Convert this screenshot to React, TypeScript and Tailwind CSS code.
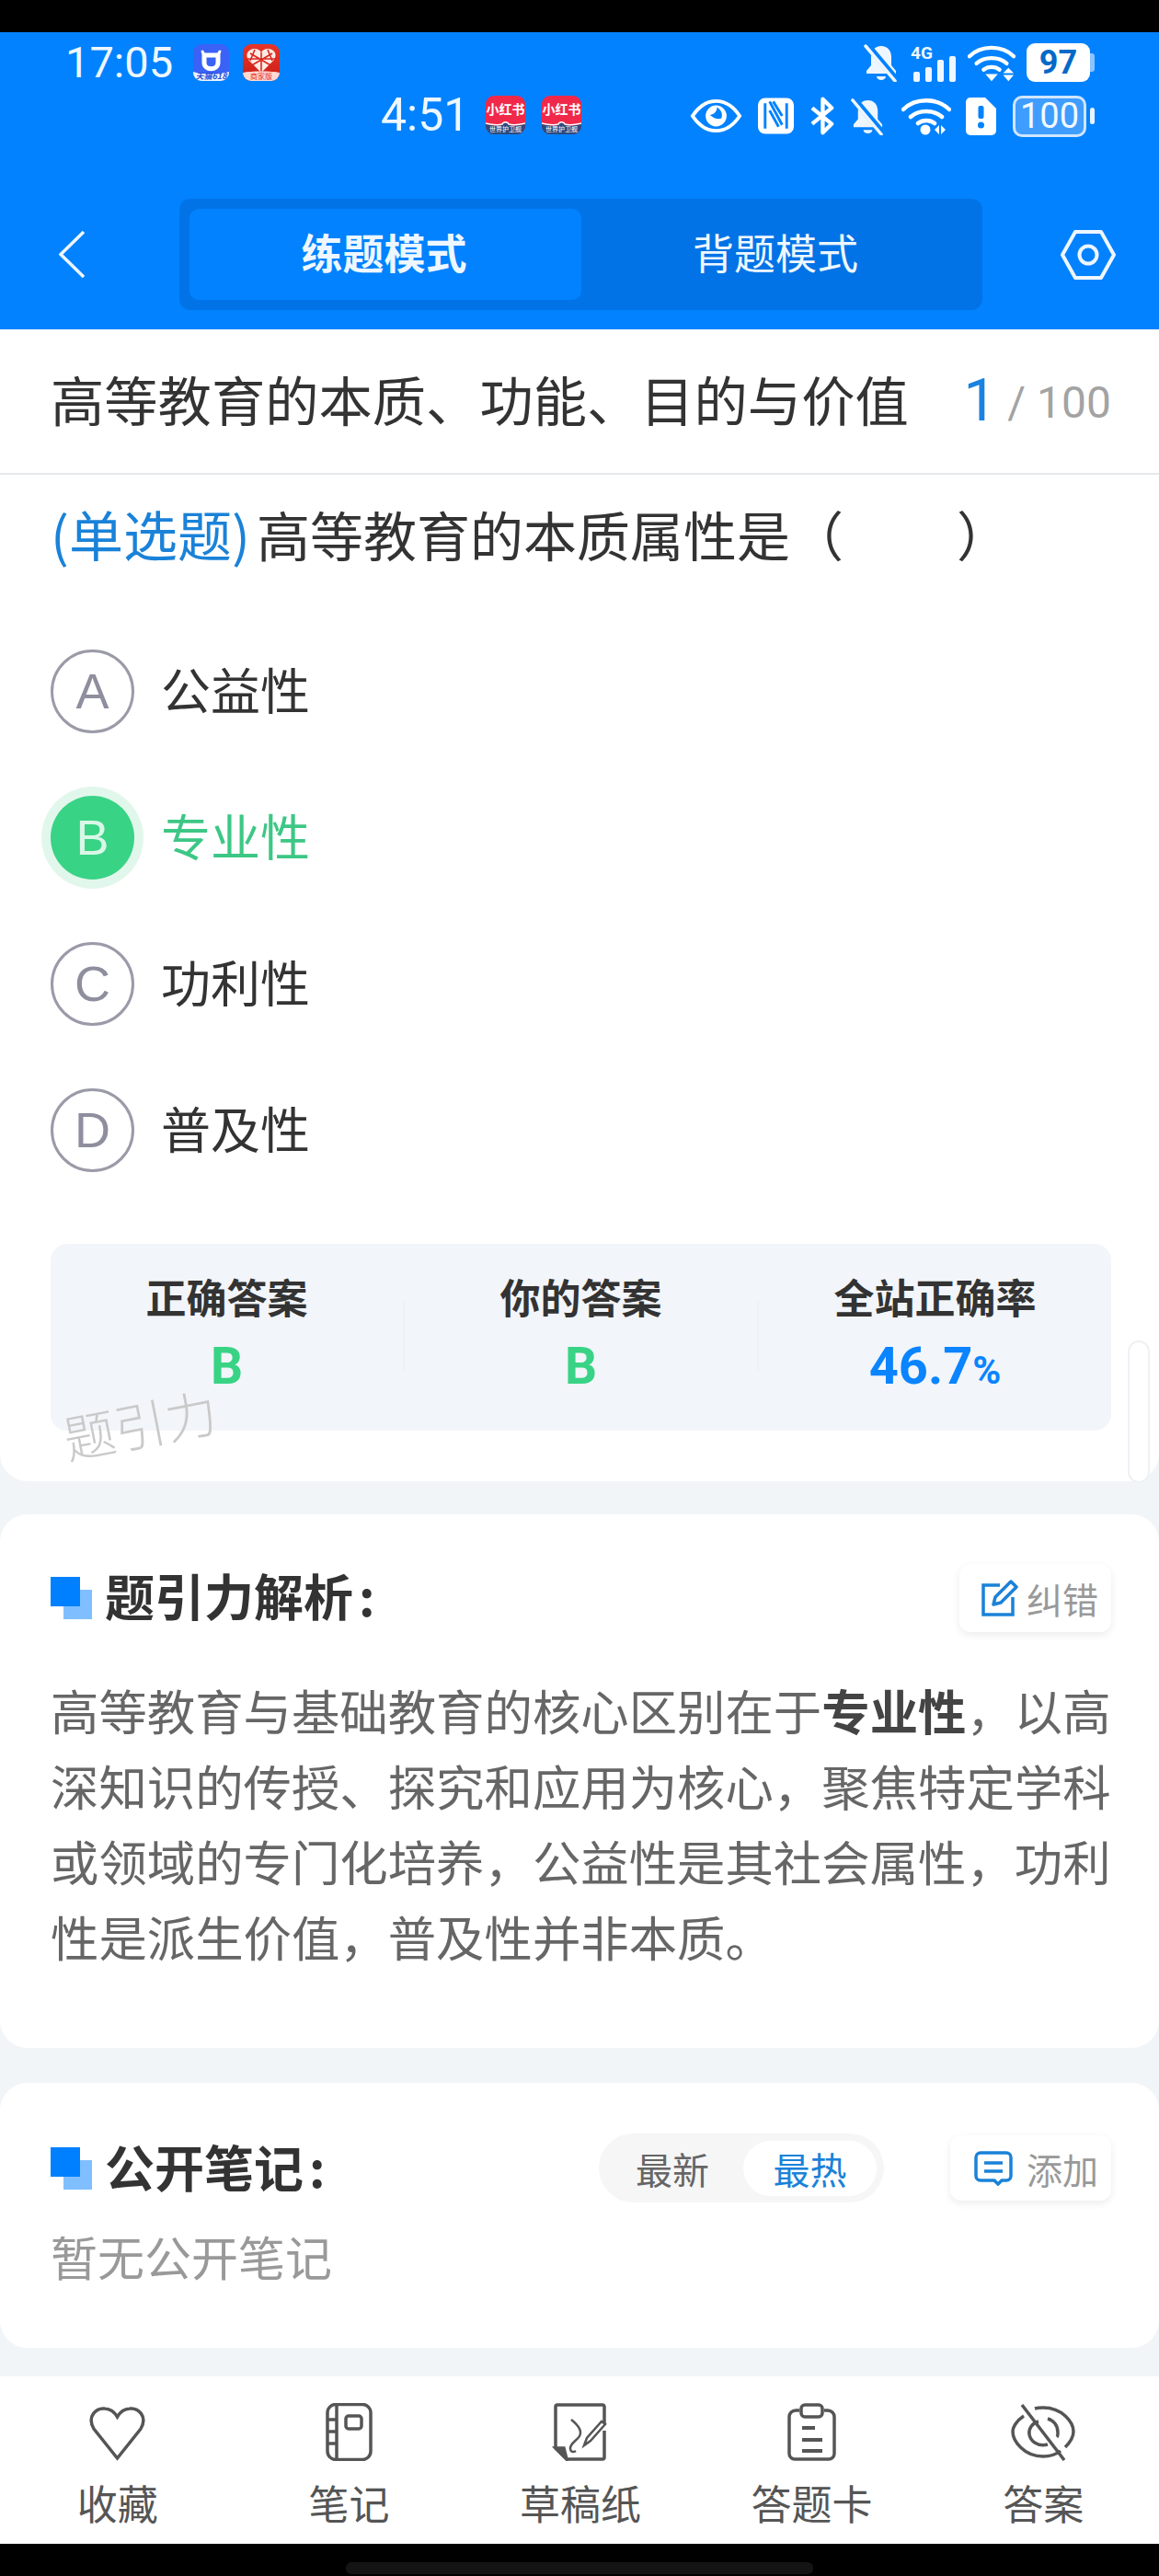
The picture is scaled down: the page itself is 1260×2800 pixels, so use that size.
const cjk = "font-['Noto_Sans_CJK_SC','Noto_Sans',sans-serif]"

function BellOff({ className }: { className: string }) {
  return (
    <svg viewBox="0 0 38 42" className={className}>
      <path d="M19 3c-7 0-11 5-11 12v9l-5 6v3h32v-3l-5-6v-9c0-7-4-12-11-12z" fill="#eef6ff" />
      <path d="M14 36h10a5 4 0 0 1-10 0z" fill="#eef6ff" />
      <path d="M3 1l32 38" stroke="#0282fe" strokeWidth="7" />
      <path d="M2 3l32 38" stroke="#eef6ff" strokeWidth="3.5" strokeLinecap="round" />
    </svg>
  )
}

function Wifi({ className, arrows }: { className: string; arrows: 'updown' | 'leftright' }) {
  return (
    <svg viewBox="0 0 54 42" fill="none" className={className}>
      <path d="M2 14C15 1 39 1 52 14" stroke="#fff" strokeWidth="4.5" strokeLinecap="round" />
      <path d="M10 22c9-8 25-8 34 0" stroke="#fff" strokeWidth="4.5" strokeLinecap="round" />
      <path d="M18 29c5-4 13-4 18 0" stroke="#fff" strokeWidth="4.5" strokeLinecap="round" />
      {arrows === 'updown' ? (
        <>
          <path d="M20 34h14l-7 8z" fill="#fff" />
          <path d="M40 33l6-6 6 6zM40 35h12l-6 7z" fill="#fff" />
        </>
      ) : (
        <>
          <circle cx="26" cy="36" r="5.5" fill="#fff" />
          <path d="M36 36l5-5v10zM43 31l5 5-5 5z" fill="#fff" />
        </>
      )}
    </svg>
  )
}

function StatusBars() {
  return (
    <div className="flex justify-between pl-[71px] pr-[70px]">
      <div className="flex flex-col">
        <div className="flex items-center h-[42px] mt-[12px]">
          <span className="font-['Roboto',sans-serif] text-[47px] leading-[42px] text-[#eef7ff] w-[139px]">17:05</span>
          <div className="relative w-[39px] h-[40px] rounded-[9px] overflow-hidden bg-[#3a62f6]">
            <svg viewBox="0 0 39 40" className="w-[39px] h-[40px]" fill="none">
              <path d="M10 8l3 5M29 8l-3 5" stroke="#fff" strokeWidth="3" strokeLinecap="round" />
              <path d="M12 12h15v8c0 9-15 9-15 0z" stroke="#fff" strokeWidth="5" />
              <path d="M0 30c8 3 31 3 39 0v10H0z" fill="#eef4ff" />
            </svg>
            <div className="absolute left-0 right-0 bottom-0 text-[9px] leading-[11px] text-center font-bold italic text-[#2a4fd8]">天猫618</div>
          </div>
          <div className="relative w-[40px] h-[40px] ml-[15px] rounded-[9px] overflow-hidden bg-gradient-to-b from-[#e8352a] to-[#c91d16]">
            <svg viewBox="0 0 40 40" className="w-[40px] h-[40px]">
              <path d="M20 31L6 17c-4-6 0-12 7-12 3 0 5 1 7 4 2-3 4-4 7-4 7 0 11 6 7 12z" fill="#ffe9e2" />
              <path d="M20 9v22M8 10l24 14M32 10L8 24M4 16h32M13 6l-5 12M27 6l5 12" stroke="#d9281f" strokeWidth="1.6" />
              <path d="M0 31c8-2 32-2 40 0v9H0z" fill="#ffd9d2" />
            </svg>
            <div className="absolute left-0 right-0 bottom-0 text-[8px] leading-[10px] text-center text-[#e3291f]">商家版</div>
          </div>
        </div>
        <div className="flex items-center h-[42px] mt-[15px] ml-[343px]">
          <span className="font-['Roboto',sans-serif] text-[50px] leading-[42px] text-[#eef7ff] w-[114px]">4:51</span>
          {[0, 1].map((i) => (
            <div key={i} className={`relative w-[43px] h-[42px] rounded-[9px] overflow-hidden bg-[#f0294a] ${i ? 'ml-[18px]' : ''}`}>
              <div className="text-[14px] leading-[16px] mt-[6px] text-center font-bold text-white whitespace-nowrap">小红书</div>
              <svg viewBox="0 0 43 16" className="absolute left-0 bottom-0 w-[43px] h-[16px]">
                <path d="M0 5c8 2 14 2 18 1 1-3 6-3 7 0 4 1 10 1 18-1v11H0z" fill="#2c4a7e" />
                <path d="M0 4c8 2 14 2 18 1 1-3 6-3 7 0 4 1 10 1 18-1" stroke="#fff" strokeWidth="1.4" fill="none" />
              </svg>
              <div className="absolute left-0 right-0 bottom-[1px] text-[7px] leading-[9px] text-center text-white whitespace-nowrap">世界护卫舰</div>
            </div>
          ))}
        </div>
      </div>
      <div className="flex flex-col items-end">
        <div className="flex items-center h-[44px] mt-[11px]">
          <BellOff className="w-[38px] h-[42px]" />
          <svg viewBox="0 0 50 42" className="w-[50px] h-[42px] ml-[13px]">
            <text x="0" y="17" fontSize="19" fontWeight="700" fill="#eef6ff" fontFamily="Roboto, sans-serif">4G</text>
            <rect x="3" y="31" width="7" height="11" rx="2" fill="#eef6ff" />
            <rect x="16" y="26" width="7" height="16" rx="2" fill="#eef6ff" />
            <rect x="29" y="18" width="7" height="24" rx="2" fill="#eef6ff" />
            <rect x="42" y="14" width="7" height="28" rx="2" fill="#eef6ff" />
          </svg>
          <Wifi arrows="updown" className="w-[52px] h-[42px] ml-[12px]" />
          <div className="flex items-center ml-[12px]">
            <div className="w-[69px] h-[42px] rounded-[9px] bg-white text-[#0469c9] font-['Roboto',sans-serif] font-bold text-[36px] leading-[42px] text-center">97</div>
            <div className="w-[5px] h-[20px] rounded-r-[3px] bg-[#8cc4ff]" />
          </div>
        </div>
        <div className="flex items-center h-[46px] mt-[13px]">
          <svg viewBox="0 0 58 40" fill="none" className="w-[57px] h-[38px]">
            <path d="M2 20C10 8 19 3 29 3s19 5 27 17c-8 12-17 17-27 17S10 32 2 20z" stroke="#fff" strokeWidth="4" />
            <circle cx="29" cy="20" r="12" fill="#fff" />
            <path d="M22 19c5-1 8-4 8-9 5 3 7 8 5 13-4 1-9 0-13-4z" fill="#0282fe" />
          </svg>
          <svg viewBox="0 0 40 40" fill="none" className="w-[39px] h-[40px] ml-[17px]">
            <rect width="40" height="40" rx="8" fill="#fff" />
            <path d="M8 6v28M32 6v28" stroke="#0282fe" strokeWidth="3" />
            <path d="M13 4l14 26M13 14l10 18M17 4l10 16" stroke="#0282fe" strokeWidth="3" />
          </svg>
          <svg viewBox="0 0 28 42" fill="none" className="w-[27px] h-[42px] ml-[17px]">
            <path d="M3 12l22 18-10 10V2l10 10L3 30" stroke="#fff" strokeWidth="4.5" strokeLinejoin="round" />
          </svg>
          <BellOff className="w-[39px] h-[41px] ml-[17px]" />
          <Wifi arrows="leftright" className="w-[54px] h-[42px] ml-[17px]" />
          <svg viewBox="0 0 33 41" className="w-[33px] h-[41px] ml-[16px]">
            <path d="M5 0h16l12 12v24a5 5 0 0 1-5 5H5a5 5 0 0 1-5-5V5a5 5 0 0 1 5-5z" fill="#fff" />
            <rect x="13.5" y="9" width="6" height="14" rx="2" fill="#0282fe" />
            <circle cx="16.5" cy="30" r="3.5" fill="#0282fe" />
          </svg>
          <div className="flex items-center ml-[18px]">
            <div className="w-[80px] h-[45px] rounded-[10px] border-[3px] border-[#cfe6ff] bg-[#3f9dff] text-[#f2f9ff] font-['Roboto',sans-serif] text-[38px] leading-[39px] text-center">100</div>
            <div className="w-[5px] h-[18px] ml-[4px] rounded-[3px] bg-[#eaf4ff]" />
          </div>
        </div>
      </div>
    </div>
  )
}

function NavBar() {
  return (
    <div className="flex items-center h-[121px] mt-[67px]">
      <div className="w-[195px] pl-[64px]">
        <svg viewBox="0 0 28 51" fill="none" className="w-[28px] h-[51px]">
          <path d="M27 1L2 25.5 27 50" stroke="#eef6ff" strokeWidth="3.5" />
        </svg>
      </div>
      <div className="w-[873px] h-[121px] rounded-[12px] bg-[#0273e6] flex p-[11px]">
        <div className="w-[426px] rounded-[10px] bg-[#0282fe] text-center text-[45px] leading-[94px] font-bold text-[#eef7ff] pr-[3px]">练题模式</div>
        <div className="flex-1 text-center text-[45px] leading-[94px] text-[#eef7ff] pr-[3px]">背题模式</div>
      </div>
      <div className="flex-1 pl-[85px]">
        <svg viewBox="0 0 60 54" fill="none" className="w-[60px] h-[54px]">
          <path d="M16 2h28l14 25-14 25H16L2 27z" stroke="#eef6ff" strokeWidth="4" strokeLinejoin="round" />
          <circle cx="30" cy="27" r="9.5" stroke="#eef6ff" strokeWidth="4" />
        </svg>
      </div>
    </div>
  )
}

function OptionRow({ letter, text, active }: { letter: string; text: string; active?: boolean }) {
  return (
    <div className="flex items-center h-[159px] pl-[55px]">
      {active ? (
        <div className="w-[91px] h-[91px] rounded-full bg-[#39d385] ring-[10px] ring-[#e2f7ec] text-[#d9f7e7] text-center text-[54px] leading-[91px] font-['Liberation_Sans',sans-serif]">{letter}</div>
      ) : (
        <div className="w-[91px] h-[91px] rounded-full border-[3px] border-[#9a9aa8] text-[#8e8e9e] text-center text-[54px] leading-[85px] font-['Liberation_Sans',sans-serif]">{letter}</div>
      )}
      <span className={`ml-[29px] text-[54px] leading-[70px] -translate-y-[3px] ${active ? 'text-[#3dc785]' : 'text-[#333]'}`}>{text}</span>
    </div>
  )
}

function Marker() {
  return (
    <div className="relative w-[45px] h-[46px]">
      <div className="absolute left-[14px] top-[14px] w-[31px] h-[32px] bg-[#80bfff]" />
      <div className="absolute left-0 top-0 w-[32px] h-[32px] bg-[#0080ff]" />
    </div>
  )
}

function Stat({ label, children }: { label: string; children: React.ReactNode }) {
  return (
    <div className="flex-1 flex flex-col items-center pt-[32px]">
      <div className="text-[44px] leading-[50px] font-bold text-[#333]">{label}</div>
      <div className="mt-[21px] leading-[60px]">{children}</div>
    </div>
  )
}

function ToolButton({ className, label, children }: { className: string; label: string; children: React.ReactNode }) {
  return (
    <div className={`flex items-center rounded-[12px] bg-white shadow-[0_3px_8px_rgba(0,0,0,0.08)] ${className}`}>
      {children}
      <span className="text-[39px] leading-[50px] text-[#999]">{label}</span>
    </div>
  )
}

const navItems = [
  {
    label: '收藏',
    icon: (
      <svg viewBox="0 0 63 63" fill="none" className="w-[63px] h-[63px]" stroke="#555" strokeWidth="3.5">
        <path d="M31.5 60L6 28C-2 14 9 5 18 6c6 .5 10 3 13.5 9C35 9 39 6.5 45 6c9-1 20 8 12 22z" strokeLinejoin="miter" />
      </svg>
    ),
  },
  {
    label: '笔记',
    icon: (
      <svg viewBox="0 0 63 63" fill="none" className="w-[63px] h-[63px]" stroke="#555" strokeWidth="3.5">
        <rect x="8" y="1.5" width="47" height="60" rx="9" />
        <path d="M18 2v59M8 18h10M8 31h10M8 44h10" />
        <rect x="28" y="14" width="17" height="14" rx="3" />
      </svg>
    ),
  },
  {
    label: '草稿纸',
    icon: (
      <svg viewBox="0 0 63 63" fill="none" className="w-[63px] h-[63px]" stroke="#555" strokeWidth="3.5">
        <path d="M58 22V4a2 2 0 0 0-2-2H7a2 2 0 0 0-2 2v45l12 12h39a2 2 0 0 0 2-2V30" />
        <path d="M5 49h9l3 12z" fill="#555" />
        <path d="M22 18c5 4 13 11 9 18-3 5-11 8-10 14 .5 3 3 4 6 2" strokeWidth="2.5" />
        <path d="M36 46l3-8 16-18 4 3-16 18z" strokeWidth="2.5" />
      </svg>
    ),
  },
  {
    label: '答题卡',
    icon: (
      <svg viewBox="0 0 63 63" fill="none" className="w-[63px] h-[63px]" stroke="#555" strokeWidth="3.5">
        <path d="M18 8h-4a7 7 0 0 0-7 7v40a6 6 0 0 0 6 6h37a6 6 0 0 0 6-6V15a7 7 0 0 0-7-7h-4" />
        <rect x="20" y="2" width="23" height="13" rx="4" />
        <path d="M21 27h14M21 40h22M21 52h22" strokeWidth="4" />
      </svg>
    ),
  },
  {
    label: '答案',
    icon: (
      <svg viewBox="0 0 70 63" fill="none" className="w-[70px] h-[63px]" stroke="#555" strokeWidth="3.5">
        <path d="M14 14C5 20 2 27 2 31c0 10 12 27 33 27 8 0 14-2 19-6M26 6c3-1 6-1 9-1 21 0 33 16 33 26 0 6-4 12-9 17" />
        <path d="M30 20c-7 2-11 8-10 14 1 7 9 14 20 11M40 17c7 2 11 8 11 15 0 2 0 4-1 5" />
        <path d="M12 2l46 60" />
      </svg>
    ),
  },
]

export default function App() {
  return (
    <div className={`w-[1260px] h-[2800px] flex flex-col bg-[#f2f5f8] overflow-hidden relative ${cjk}`}>
      <div className="h-[35px] bg-black shrink-0" />
      <div className="h-[323px] bg-[#0282fe] shrink-0 overflow-hidden">
        <StatusBars />
        <NavBar />
      </div>

      <div className="bg-white rounded-b-[30px] h-[1252px] shrink-0">
        <div className="flex items-center justify-between h-[158px] border-b-2 border-[#e6e8eb] pl-[55px] pr-[52px]">
          <span className="text-[58.3px] leading-[80px] text-[#333] -translate-y-[3px]">高等教育的本质、功能、目的与价值</span>
          <span className="flex items-baseline font-['Roboto',sans-serif] -translate-y-[1px]">
            <span className="text-[64px] leading-[80px] text-[#1a82e0] translate-y-[3px]">1</span>
            <span className="text-[48px] leading-[80px] text-[#a3a3a3] ml-[12px]">/ 100</span>
          </span>
        </div>
        <div className="pl-[55px] pt-[24px] text-[58px] leading-[80px] text-[#333] whitespace-nowrap">
          <span className="text-[#1a82d8] text-[59px] mr-[7px]">(单选题)</span>高等教育的本质属性是（<span className="inline-block w-[123px]" />）
        </div>
        <div className="mt-[52px]">
          <OptionRow letter="A" text="公益性" />
          <OptionRow letter="B" text="专业性" active />
          <OptionRow letter="C" text="功利性" />
          <OptionRow letter="D" text="普及性" />
        </div>
        <div className="flex ml-[55px] mr-[52px] mt-[44px] h-[203px] rounded-[18px] bg-[#f2f5f9]">
          <Stat label="正确答案">
            <span className="text-[55px] font-bold text-[#39d385] font-['Roboto',sans-serif]">B</span>
          </Stat>
          <div className="w-[2px] h-[75px] mt-[63px] bg-[#edf0f4]" />
          <Stat label="你的答案">
            <span className="text-[55px] font-bold text-[#39d385] font-['Roboto',sans-serif]">B</span>
          </Stat>
          <div className="w-[2px] h-[75px] mt-[63px] bg-[#edf0f4]" />
          <Stat label="全站正确率">
            <span className="font-bold text-[#0a84ff] font-['Roboto',sans-serif]">
              <span className="text-[56px]">46.7</span>
              <span className="text-[42px]">%</span>
            </span>
          </Stat>
        </div>
      </div>

      <div className="bg-white rounded-[30px] h-[580px] mt-[36px] pr-[52px] pl-[55px] pt-[54px] shrink-0">
        <div className="flex items-center justify-between">
          <div className="flex items-center">
            <Marker />
            <span className="ml-[14px] text-[54px] leading-[74px] font-bold text-[#333] -translate-y-[3px]">题引力解析<span className="ml-[6px]">:</span></span>
          </div>
          <ToolButton className="w-[165px] h-[74px] pl-[24px]" label="纠错">
            <svg viewBox="0 0 40 40" fill="none" className="w-[40px] h-[40px] mr-[9px]" stroke="#1a82d8" strokeWidth="3.5">
              <path d="M20 6H2v32h32V19" />
              <path d="M13 27l2-8L32 2l6 6-17 17z" strokeLinejoin="round" />
            </svg>
          </ToolButton>
        </div>
        <p className="mt-[43px] text-[52.4px] leading-[82px] text-[#666]">
          高等教育与基础教育的核心区别在于<b className="font-bold text-[#444]">专业性</b>，以高深知识的传授、探究和应用为核心，聚焦特定学科或领域的专门化培养，公益性是其社会属性，功利性是派生价值，普及性并非本质。
        </p>
      </div>

      <div className="bg-white rounded-[30px] h-[288px] mt-[38px] pl-[55px] pr-[52px] pt-[55px] shrink-0">
        <div className="flex items-center h-[75px]">
          <Marker />
          <span className="ml-[14px] text-[54px] leading-[74px] font-bold text-[#333] -translate-y-[2px]">公开笔记<span className="ml-[6px]">:</span></span>
          <div className="ml-auto flex items-center w-[310px] h-[75px] rounded-full bg-[#f6f6f6] pl-[40px] pr-[8px]">
            <span className="text-[40px] leading-[50px] text-[#666]">最新</span>
            <div className="ml-auto w-[145px] h-[60px] rounded-full bg-white text-center text-[40px] leading-[60px] text-[#1a82d8]">最热</div>
          </div>
          <ToolButton className="w-[175px] h-[71px] pl-[26px] ml-[72px]" label="添加">
            <svg viewBox="0 0 42 38" fill="none" className="w-[42px] h-[38px] mr-[15px]" stroke="#1a82d8" strokeWidth="3.5">
              <path d="M7 2h28a5 5 0 0 1 5 5v20a5 5 0 0 1-5 5h-5l-4 4-4-4H7a5 5 0 0 1-5-5V7a5 5 0 0 1 5-5z" />
              <path d="M11 13h20M11 22h20" />
            </svg>
          </ToolButton>
        </div>
        <div className="mt-[23px] text-[51px] leading-[70px] text-[#999]">暂无公开笔记</div>
      </div>

      <div className="flex bg-white h-[182px] mt-[31px] shrink-0 pl-[2px]">
        {navItems.map((item) => (
          <div key={item.label} className="flex-1 flex flex-col items-center pt-[29px]">
            {item.icon}
            <span className="mt-[15px] text-[44px] leading-[60px] text-[#555]">{item.label}</span>
          </div>
        ))}
      </div>
      <div className="flex-1 bg-black flex justify-center items-start pt-[20px]">
        <div className="w-[508px] h-[13px] rounded-[6px] bg-[#141414]" />
      </div>

      {/* watermark + faint scroll handle sit on top of the card */}
      <div className="absolute left-[68px] top-[1512px] text-[56px] leading-[70px] font-light text-[#c9c9c9] -rotate-[11deg]">题引力</div>
      <div className="absolute left-[1226px] top-[1457px] w-[24px] h-[155px] rounded-full border-2 border-[#eef1f4] bg-white" />
    </div>
  )
}
